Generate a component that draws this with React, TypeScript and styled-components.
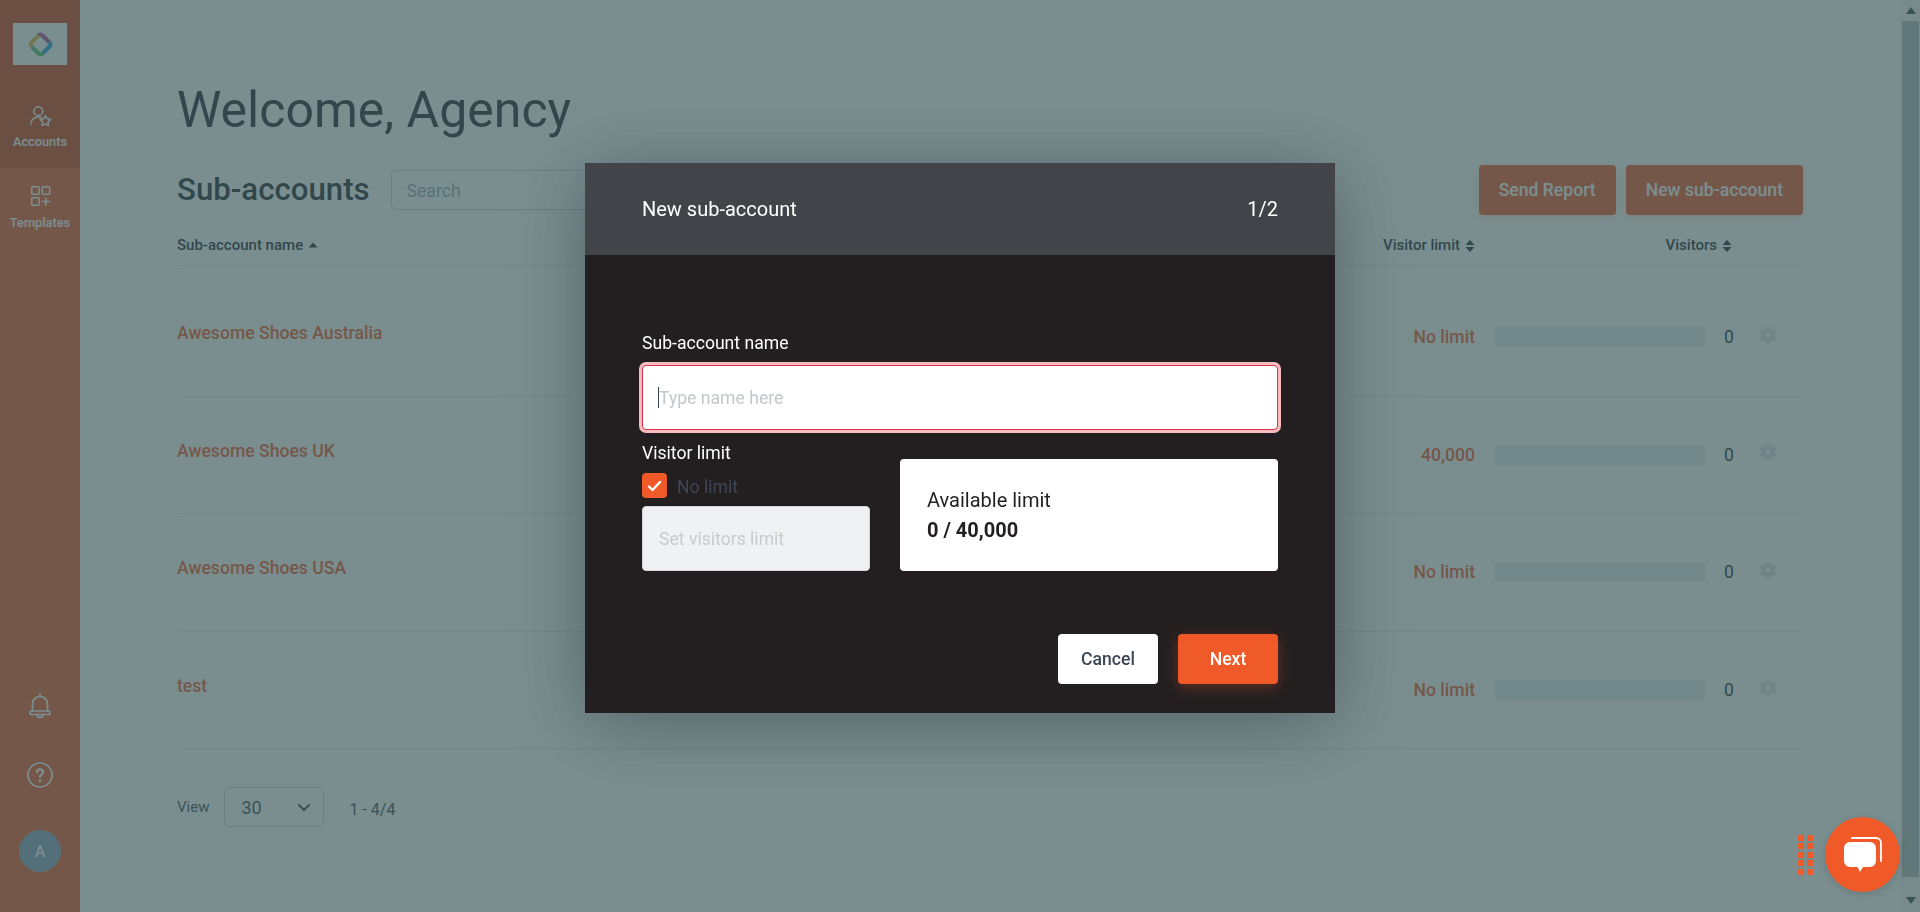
import React from "react";
import styled, { createGlobalStyle } from "styled-components";
import { FaCog } from "react-icons/fa";

const Global = createGlobalStyle`
  html, body { margin: 0; padding: 0; height: 100%; overflow: hidden; background: #fff; }
  body { font-family: Roboto, "Liberation Sans", sans-serif; color: #22292f; }
  * { box-sizing: border-box; }
`;

const Page = styled.div`
  width: 1920px;
  height: 912px;
  display: flex;
  overflow: hidden;
  background: #fff;
`;

const Sidebar = styled.nav`
  width: 80px;
  flex: none;
  display: flex;
  flex-direction: column;
  align-items: stretch;
  background: #f05a28;
  color: #fff;
  padding-bottom: 40px;
`;

const LogoZone = styled.div`
  height: 84px;
  background: #d44218;
  display: flex;
  justify-content: center;
  padding-top: 23px;
`;

const LogoBox = styled.div`
  width: 54px;
  height: 42px;
  background: #fff;
  display: flex;
  align-items: center;
  justify-content: center;
`;

const NavItem = styled.div<{ $active?: boolean }>`
  height: 84px;
  background: ${(p) => (p.$active ? "#d44218" : "transparent")};
  display: flex;
  flex-direction: column;
  align-items: center;
  padding-top: ${(p) => (p.$active ? 21 : 17)}px;
  gap: ${(p) => (p.$active ? 8 : 9)}px;
  font-size: 12.8px;
  font-weight: 500;
  line-height: 14px;
`;

const NavIcon = styled.svg`
  width: 23px;
  height: 22px;
  fill: none;
  stroke: #fff;
  stroke-width: 1.7;
  stroke-linecap: round;
  stroke-linejoin: round;
`;

const SideBottom = styled.div`
  margin-top: auto;
  display: flex;
  flex-direction: column;
  align-items: center;
`;

const Bell = styled(NavIcon)`
  width: 26px;
  height: 28px;
  margin-bottom: 42px;
`;

const Help = styled(NavIcon)`
  width: 26px;
  height: 26px;
  margin-bottom: 42px;
`;

const Avatar = styled.div`
  width: 42px;
  height: 42px;
  border-radius: 50%;
  background: #85a0bc;
  display: flex;
  align-items: center;
  justify-content: center;
  font-size: 16px;
  font-weight: 500;
`;

const Main = styled.main`
  flex: 1;
  min-width: 0;
  padding: 82px 97px 0;
`;

const Title = styled.h1`
  margin: 0 0 27px;
  font-size: 50px;
  font-weight: 400;
  line-height: 56px;
`;

const Toolbar = styled.div`
  height: 50px;
  display: flex;
  align-items: center;
  gap: 10px;
`;

const Heading = styled.h2`
  margin: 0 11px 0 0;
  font-size: 31.2px;
  font-weight: 500;
  line-height: 36px;
`;

const Search = styled.input`
  width: 420px;
  height: 40px;
  border: 1px solid #c7d0d8;
  border-radius: 5px;
  padding: 1px 15px 0;
  font: 400 17.6px Roboto, sans-serif;
  background: #fff;
  &::placeholder { color: #9aa5b1; }
`;

const ActionButton = styled.button`
  height: 50px;
  padding: 0 20px;
  border: 0;
  border-radius: 4px;
  background: #f05a28;
  color: #fff;
  font: 500 17.6px Roboto, sans-serif;
  box-shadow: 0 3px 10px rgba(240, 90, 40, 0.25);
`;

const Spacer = styled.div`
  flex: 1;
`;

const tableColumns = "1fr 150px 230px 48px 30px 20px";

const HeadRow = styled.div`
  margin-top: 10px;
  height: 41px;
  display: grid;
  grid-template-columns: ${tableColumns};
  align-items: center;
  border-bottom: 1px solid #e4e8ec;
  font-size: 15px;
  font-weight: 500;
`;

const HeadCell = styled.div<{ $end?: boolean; $span?: number; $pad?: number }>`
  display: flex;
  align-items: center;
  gap: 5px;
  justify-content: ${(p) => (p.$end ? "flex-end" : "flex-start")};
  grid-column: span ${(p) => p.$span ?? 1};
  padding-right: ${(p) => p.$pad ?? 0}px;
`;

const SortIcon = styled.svg`
  width: 10px;
  height: 14px;
  fill: #22292f;
  margin-top: 2px;
`;

const TableBody = styled.div`
  padding-top: 13px;
`;

const Row = styled.div`
  height: 117.6px;
  display: grid;
  grid-template-columns: ${tableColumns};
  align-items: center;
  border-bottom: 1px solid #e4e8ec;
  font-size: 17.6px;
  font-weight: 500;
`;

const NameCell = styled.div`
  color: #f05a28;
  margin-bottom: 8px;
`;

const LimitCell = styled.div`
  color: #f05a28;
  text-align: right;
`;

const BarCell = styled.div`
  padding-left: 20px;
`;

const Bar = styled.div`
  height: 20px;
  border-radius: 2px;
  background: #e6e9ec;
`;

const CountCell = styled.div`
  text-align: center;
  font-weight: 400;
`;

const GearCell = styled.div`
  display: flex;
  justify-content: center;
  color: #dde1e4;
  font-size: 18px;
  margin-bottom: 5px;
`;

const Pager = styled.div`
  margin-top: 38px;
  display: flex;
  align-items: center;
  font-size: 15px;
  color: #3d4852;
`;

const PageSelect = styled.div`
  width: 100px;
  height: 40px;
  margin-left: 15px;
  padding: 0 12px 0 16px;
  border: 1px solid #c7d0d8;
  border-radius: 5px;
  display: flex;
  align-items: center;
  justify-content: space-between;
  font-size: 18px;
`;

const PageCount = styled.span`
  margin: 5px 0 0 25px;
  font-size: 16px;
`;

const ScrollRail = styled.div`
  width: 20px;
  flex: none;
  background: #f5f5f5;
  display: flex;
  flex-direction: column;
  align-items: center;
  padding: 7px 0 7px 1px;
`;

const ScrollThumb = styled.div`
  width: 17px;
  margin-top: 7px;
  height: 856px;
  background: #b2b9bb;
`;

const ScrollArrow = styled.svg`
  width: 10px;
  height: 7px;
  fill: #3a4a4e;
  flex: none;
`;

const DownArrow = styled(ScrollArrow)`
  margin-top: auto;
  margin-bottom: 1px;
`;

const Overlay = styled.div`
  position: fixed;
  inset: 0;
  background: rgba(57, 87, 90, 0.67);
  display: flex;
  justify-content: center;
  align-items: flex-start;
  padding-top: 163px;
`;

const Modal = styled.div`
  width: 750px;
  height: 550px;
  background: #231f20;
  color: #fff;
  box-shadow: 0 10px 70px rgba(20, 30, 35, 0.38);
`;

const ModalHeader = styled.header`
  height: 92px;
  background: #434449;
  padding: 0 57px;
  display: flex;
  align-items: center;
  justify-content: space-between;
  font-size: 20px;
  font-weight: 400;
`;

const ModalBody = styled.div`
  padding: 78px 57px 0;
`;

const FieldLabel = styled.div`
  font-size: 17.6px;
  line-height: 20px;
`;

const NameField = styled.div`
  position: relative;
  margin-top: 12px;
`;

const NameInput = styled.input`
  display: block;
  width: 100%;
  height: 65px;
  border: 1px solid #d9344a;
  border-radius: 4px;
  box-shadow: 0 0 0 3px #f8bcc0;
  padding: 0 16px;
  font: 400 17.6px Roboto, sans-serif;
  background: #fff;
  outline: none;
  &::placeholder { color: #c3c6cd; opacity: 1; }
`;

const Caret = styled.span`
  position: absolute;
  left: 16px;
  top: 22px;
  width: 1px;
  height: 21px;
  background: #3c4250;
`;

const LimitGrid = styled.div`
  margin-top: 13px;
  display: grid;
  grid-template-columns: 228px 378px;
  column-gap: 30px;
  align-items: end;
`;

const CheckRow = styled.div`
  margin-top: 10px;
  height: 25px;
  display: flex;
  align-items: center;
  gap: 10px;
  color: #3f4656;
  font-size: 17.6px;
  line-height: 25px;
`;

const CheckText = styled.span`
  margin-top: 3px;
`;

const CheckBox = styled.div`
  width: 25px;
  height: 25px;
  border-radius: 4px;
  background: #f05a28;
  display: flex;
  align-items: center;
  justify-content: center;
`;

const LimitInput = styled.input`
  display: block;
  width: 100%;
  height: 65px;
  margin-top: 8px;
  border: 1px solid #d4d5d8;
  border-radius: 4px;
  padding: 0 16px;
  background: #f0f1f3;
  font: 400 17.6px Roboto, sans-serif;
  &::placeholder { color: #c9cacd; opacity: 1; }
`;

const AvailableBox = styled.div`
  height: 112px;
  border-radius: 4px;
  background: #fff;
  color: #231f20;
  padding: 0 27px;
  display: flex;
  flex-direction: column;
  justify-content: center;
  gap: 8px;
  font-size: 20px;
  line-height: 22px;
`;

const AvailableValue = styled.strong`
  font-weight: 700;
`;

const ModalActions = styled.div`
  margin-top: 63px;
  display: flex;
  justify-content: flex-end;
  gap: 20px;
`;

const ModalButton = styled.button<{ $primary?: boolean }>`
  width: 100px;
  height: 50px;
  border: 0;
  border-radius: 4px;
  background: ${(p) => (p.$primary ? "#f05a28" : "#fff")};
  color: ${(p) => (p.$primary ? "#fff" : "#3c4654")};
  font: 500 17.6px Roboto, sans-serif;
  box-shadow: ${(p) => (p.$primary ? "0 4px 14px rgba(240, 90, 40, 0.3)" : "none")};
`;

const ChatDock = styled.div`
  position: fixed;
  left: 1798px;
  top: 817px;
  display: flex;
  align-items: center;
  gap: 12.5px;
`;

const Grip = styled.div`
  display: grid;
  grid-template-columns: 6px 6px;
  grid-auto-rows: 6px;
  gap: 2.5px;
`;

const GripDot = styled.span`
  border-radius: 1px;
  background: #f05a28;
`;

const ChatBubble = styled.div`
  width: 75px;
  height: 75px;
  border-radius: 50%;
  background: #f05a28;
  display: flex;
  align-items: center;
  justify-content: center;
  box-shadow: 0 2px 10px rgba(0, 0, 0, 0.15);
`;

const rows = [
  { name: "Awesome Shoes Australia", limit: "No limit" },
  { name: "Awesome Shoes UK", limit: "40,000" },
  { name: "Awesome Shoes USA", limit: "No limit" },
  { name: "test", limit: "No limit" },
];

const Sort = () => (
  <SortIcon viewBox="0 0 10 14">
    <path d="M5 1 9.5 6H.5zM.5 8h9L5 13z" />
  </SortIcon>
);

export default function App() {
  return (
    <Page>
      <Global />
      <Sidebar>
        <LogoZone>
          <LogoBox>
            <svg width="27" height="27" viewBox="0 0 27 27" fill="none" strokeWidth="4">
              <path d="M11.5 4.500Q13.500 2.500 15.500 4.500L22.500 11.500" stroke="#b04fa0" />
              <path d="M22.500 11.500Q24.500 13.500 22.500 15.500L15.500 22.500" stroke="#1f9ed1" />
              <path d="M15.500 22.500Q13.500 24.500 11.500 22.500L4.500 15.500" stroke="#5fbf6a" />
              <path d="M4.500 15.500Q2.500 13.500 4.500 11.500L11.500 4.500" stroke="#e9b44c" />
            </svg>
          </LogoBox>
        </LogoZone>
        <NavItem $active>
          <NavIcon viewBox="0 0 26 25">
            <circle cx="10.5" cy="7" r="5" />
            <path d="M2 22c0-5 3.500-8.500 8.500-8.500 1.500 0 2.500.3 3.500.8" />
            <path d="m18.500 12 1.900 3.700 4.100.6-3 2.900.7 4.100-3.700-1.900-3.700 1.900.7-4.100-3-2.900 4.100-.6z" />
          </NavIcon>
          Accounts
        </NavItem>
        <NavItem>
          <NavIcon viewBox="0 0 26 25">
            <rect x="3" y="2" width="8.500" height="8.500" rx="1" />
            <rect x="15" y="2" width="8.500" height="8.500" rx="1" />
            <rect x="3" y="14.500" width="8.500" height="8.500" rx="1" />
            <path d="M19.200 14.500v8.500M15 18.700h8.500" />
          </NavIcon>
          Templates
        </NavItem>
        <SideBottom>
          <Bell viewBox="0 0 26 28">
            <path d="M13 2v2.500" />
            <path d="M5.500 19v-7a7.500 7.500 0 0 1 15 0v7" />
            <rect x="3" y="19" width="20" height="3.500" rx="1.700" />
            <path d="M10 22.500a3 3 0 0 0 6 0" />
          </Bell>
          <Help viewBox="0 0 26 26">
            <circle cx="13" cy="13" r="12" />
            <path d="M10 10.300c0-1.800 1.300-3 3-3s3 1.200 3 2.800c0 2.400-3 2.400-3 4.700" strokeWidth="2.200" />
            <path d="M13 18.500v.2" strokeWidth="2.600" />
          </Help>
          <Avatar>A</Avatar>
        </SideBottom>
      </Sidebar>
      <Main>
        <Title>Welcome, Agency</Title>
        <Toolbar>
          <Heading>Sub-accounts</Heading>
          <Search placeholder="Search" readOnly />
          <Spacer />
          <ActionButton>Send Report</ActionButton>
          <ActionButton>New sub-account</ActionButton>
        </Toolbar>
        <HeadRow>
          <HeadCell>
            Sub-account name
            <svg width="10" height="6" viewBox="0 0 10 6" fill="#22292f"><path d="M5 .5 9.500 5.500H.5z" /></svg>
          </HeadCell>
          <HeadCell $end>
            Visitor limit <Sort />
          </HeadCell>
          <HeadCell $end $span={2} $pad={21}>
            Visitors <Sort />
          </HeadCell>
        </HeadRow>
        <TableBody>
          {rows.map((r) => (
            <Row key={r.name}>
              <NameCell>{r.name}</NameCell>
              <LimitCell>{r.limit}</LimitCell>
              <BarCell><Bar /></BarCell>
              <CountCell>0</CountCell>
              <GearCell><FaCog /></GearCell>
            </Row>
          ))}
        </TableBody>
        <Pager>
          View
          <PageSelect>
            30
            <svg width="14" height="9" viewBox="0 0 14 9" fill="none" stroke="#3d4852" strokeWidth="2"><path d="m1.500 1.500 5.500 5.500 5.500-5.500" /></svg>
          </PageSelect>
          <PageCount>1 - 4/4</PageCount>
        </Pager>
      </Main>
      <ScrollRail>
        <ScrollArrow viewBox="0 0 10 7"><path d="M5 0 10 7H0z" /></ScrollArrow>
        <ScrollThumb />
        <DownArrow viewBox="0 0 10 7"><path d="M0 0h10L5 7z" /></DownArrow>
      </ScrollRail>
      <Overlay>
        <Modal>
          <ModalHeader>
            <span>New sub-account</span>
            <span>1/2</span>
          </ModalHeader>
          <ModalBody>
            <FieldLabel>Sub-account name</FieldLabel>
            <NameField>
              <NameInput placeholder="Type name here" readOnly />
              <Caret />
            </NameField>
            <LimitGrid>
              <div>
                <FieldLabel>Visitor limit</FieldLabel>
                <CheckRow>
                  <CheckBox>
                    <svg width="15" height="12" viewBox="0 0 15 12" fill="none" stroke="#fff" strokeWidth="2.400" strokeLinecap="round" strokeLinejoin="round"><path d="m2 6.500 3.500 3.500L13 2" /></svg>
                  </CheckBox>
                  <CheckText>No limit</CheckText>
                </CheckRow>
                <LimitInput placeholder="Set visitors limit" readOnly />
              </div>
              <AvailableBox>
                <span>Available limit</span>
                <AvailableValue>0 / 40,000</AvailableValue>
              </AvailableBox>
            </LimitGrid>
            <ModalActions>
              <ModalButton>Cancel</ModalButton>
              <ModalButton $primary>Next</ModalButton>
            </ModalActions>
          </ModalBody>
        </Modal>
      </Overlay>
      <ChatDock>
        <Grip>
          {Array.from({ length: 10 }, (_, i) => <GripDot key={i} />)}
        </Grip>
        <ChatBubble>
          <svg width="40" height="36" viewBox="0 0 40 36">
            <path d="M9 1h24a5 5 0 0 1 5 5v18" fill="none" stroke="#fff" strokeWidth="1.800" strokeLinecap="round" />
            <path d="M7 5h20a6 6 0 0 1 6 6v13a6 6 0 0 1-6 6h-7l-3 5-2.500-5H7a6 6 0 0 1-6-6V11a6 6 0 0 1 6-6z" fill="#fff" />
          </svg>
        </ChatBubble>
      </ChatDock>
    </Page>
  );
}
